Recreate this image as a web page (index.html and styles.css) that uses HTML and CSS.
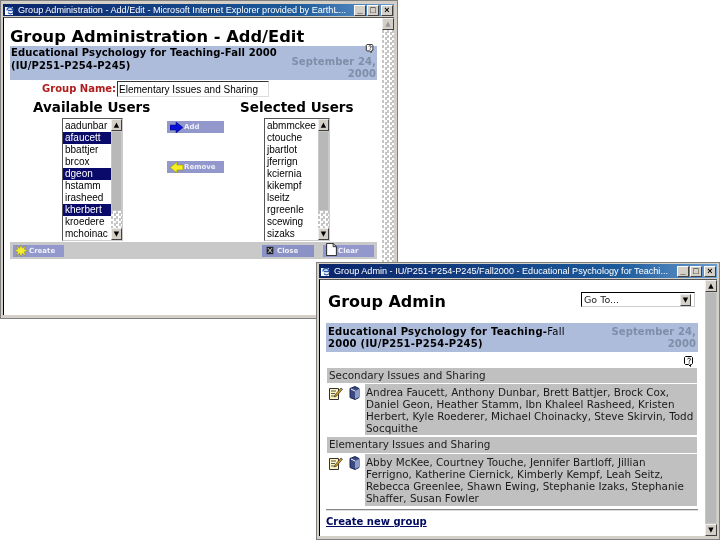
FILE: index.html
```html
<!DOCTYPE html>
<html lang="en">
<head>
<meta charset="utf-8">
<title>Group Administration</title>
<link rel="stylesheet" href="styles.css">
</head>
<body>
<svg class="defs" width="0" height="0">
  <symbol id="help" viewBox="0 0 10 11"><path d="M1.500 .5h6l1 1v6l-1 1h-1v2l-2-2h-3l-1-1v-6z" fill="#fff" stroke="#000"/><path d="M3.500 3c1-1.200 3-1 3 .3 0 1-1.300 1-1.300 2.200M5.200 6.500v1" fill="none" stroke="#000"/></symbol>
  <symbol id="edit" viewBox="0 0 14 14"><path d="M.5 2.500h9v11h-9z" fill="#fff3c0" stroke="#333"/><path d="M2 5h5M2 7.500h4M2 10h4" stroke="#555"/><path d="M6 9l6-7 1.500 1.200-6 7-2 .8z" fill="#d8a020" stroke="#333" stroke-width=".7"/></symbol>
  <symbol id="book" viewBox="0 0 13 14"><path d="M2 2.500l5-2 4 2v9l-4 2-5-2z" fill="#3a4a80" stroke="#1c2450"/><path d="M7 5v8l4-2V3z" fill="#8c9cc8"/><path d="M3 3l4 2" stroke="#fff"/></symbol>
</svg>

<section class="window win-edit">
  <header class="titlebar">
    <svg class="app-icon" width="12" height="12" viewBox="0 0 12 12"><path d="M1 3h8v8H1z" fill="#fff"/><path d="M3 6.500a3 3 0 1 1 6 0H4m5 2a3 3 0 0 1-5 0" fill="none" stroke="#2a5ab0" stroke-width="1.300"/></svg>
    <span class="title-text">Group Administration - Add/Edit - Microsoft Internet Explorer provided by EarthL...</span>
    <span class="win-buttons"><i class="wb">_</i><i class="wb">□</i><i class="wb wb-x">×</i></span>
  </header>
  <div class="client">
    <main class="page edit-page">
      <h1 class="edit-title">Group Administration - Add/Edit</h1>
      <div class="banner edit-banner">
        <div class="course edit-course">Educational Psychology for Teaching-Fall 2000<br>(IU/P251-P254-P245)</div>
        <div class="date-col">
          <svg class="help" width="10" height="11"><use href="#help"/></svg>
          <div class="date">September 24,<br>2000</div>
        </div>
      </div>
      <div class="name-row">
        <label class="name-label">Group Name:</label>
        <div class="name-input">Elementary Issues and Sharing</div>
      </div>
      <div class="pickers">
        <div class="picker picker-left">
          <h2 class="picker-title">Available Users</h2>
          <div class="listbox listbox-left">
            <ul class="options">
              <li>aadunbar</li><li class="sel">afaucett</li><li>bbattjer</li><li>brcox</li><li class="sel">dgeon</li><li>hstamm</li><li>irasheed</li><li class="sel">kherbert</li><li>kroedere</li><li>mchoinac</li>
            </ul>
            <div class="scroll scroll-list"><span class="sb-btn">▲</span><span class="sb-thumb thumb-left"></span><span class="sb-track"></span><span class="sb-btn">▼</span></div>
          </div>
        </div>
        <div class="picker-actions">
          <button class="btn btn-add"><svg width="13" height="11" viewBox="0 0 13 11"><path d="M0 3h6V0l7 5.500L6 11V8H0z" fill="#0a10d8" stroke="#000060" stroke-width=".5"/></svg><span>Add</span><b class="grip"></b></button>
          <button class="btn btn-remove"><svg width="13" height="11" viewBox="0 0 13 11"><path d="M13 3H7V0L0 5.500 7 11V8h6z" fill="#f5ee20" stroke="#8a8000" stroke-width=".5"/></svg><span>Remove</span><b class="grip"></b></button>
        </div>
        <div class="picker picker-right">
          <h2 class="picker-title">Selected Users</h2>
          <div class="listbox listbox-right">
            <ul class="options">
              <li>abmmckee</li><li>ctouche</li><li>jbartlot</li><li>jferrign</li><li>kciernia</li><li>kikempf</li><li>lseitz</li><li>rgreenle</li><li>scewing</li><li>sizaks</li>
            </ul>
            <div class="scroll scroll-list"><span class="sb-btn">▲</span><span class="sb-thumb thumb-right"></span><span class="sb-track"></span><span class="sb-btn">▼</span></div>
          </div>
        </div>
      </div>
      <div class="toolbar">
        <button class="btn btn-create"><svg width="14" height="12" viewBox="0 0 14 13"><path d="M7 0l1.500 3.500L12 1l-1.500 3.500L14 6l-3.500 1.500L12 12 8.500 9 7 13 5.500 9 2 12l1.500-4.500L0 6l3.500-1.500L2 1l3.500 2.500z" fill="#f4ee30" stroke="#807000" stroke-width=".4"/></svg><span>Create</span><b class="grip"></b></button>
        <span class="toolbar-right">
          <button class="btn btn-close"><svg width="8" height="9" viewBox="0 0 12 11"><path d="M1 0h10v11H1z" fill="#222"/><path d="M3 2l6 7M9 2l-6 7" stroke="#ddd" stroke-width="1.500"/></svg><span>Close</span><b class="grip"></b></button>
          <button class="btn btn-clear"><svg class="doc" width="11" height="13" viewBox="0 0 13 16"><path d="M.5.500h8l4 4v11H.5z" fill="#fff" stroke="#000"/><path d="M8.500.500v4h4" fill="none" stroke="#000"/></svg><span>Clear</span><b class="grip"></b></button>
        </span>
      </div>
    </main>
    <div class="scroll scroll-edit"><span class="sb-btn sb-faded">▲</span><span class="sb-track"></span></div>
  </div>
</section>

<section class="window win-admin">
  <header class="titlebar">
    <svg class="app-icon" width="12" height="12" viewBox="0 0 12 12"><path d="M1 3h8v8H1z" fill="#fff"/><path d="M3 6.500a3 3 0 1 1 6 0H4m5 2a3 3 0 0 1-5 0" fill="none" stroke="#2a5ab0" stroke-width="1.300"/></svg>
    <span class="title-text">Group Admin - IU/P251-P254-P245/Fall2000 - Educational Psychology for Teachi...</span>
    <span class="win-buttons"><i class="wb">_</i><i class="wb">□</i><i class="wb wb-x">×</i></span>
  </header>
  <div class="client">
    <main class="page admin-page">
      <div class="admin-head">
        <h1 class="admin-title">Group Admin</h1>
        <div class="goto"><span>Go To...</span><i class="sb-btn goto-arrow">▼</i></div>
      </div>
      <div class="banner admin-banner">
        <div class="course admin-course">Educational Psychology for Teaching-<span class="light">Fall</span><br>2000 (IU/P251-P254-P245)</div>
        <div class="date">September 24,<br>2000</div>
      </div>
      <div class="help-row"><svg width="10" height="11"><use href="#help"/></svg></div>
      <div class="group-name">Secondary Issues and Sharing</div>
      <div class="group-row">
        <div class="group-icons"><svg width="14" height="14"><use href="#edit"/></svg><svg width="13" height="14"><use href="#book"/></svg></div>
        <div class="members">Andrea Faucett, Anthony Dunbar, Brett Battjer, Brock Cox,<br>Daniel Geon, Heather Stamm, Ibn Khaleel Rasheed, Kristen<br>Herbert, Kyle Roederer, Michael Choinacky, Steve Skirvin, Todd<br>Socquithe</div>
      </div>
      <div class="group-name group-name-next">Elementary Issues and Sharing</div>
      <div class="group-row">
        <div class="group-icons"><svg width="14" height="14"><use href="#edit"/></svg><svg width="13" height="14"><use href="#book"/></svg></div>
        <div class="members members-next">Abby McKee, Courtney Touche, Jennifer Bartloff, Jillian<br>Ferrigno, Katherine Ciernick, Kimberly Kempf, Leah Seitz,<br>Rebecca Greenlee, Shawn Ewing, Stephanie Izaks, Stephanie<br>Shaffer, Susan Fowler</div>
      </div>
      <hr class="rule">
      <a class="create-link" href="#">Create new group</a>
    </main>
    <div class="scroll scroll-admin"><span class="sb-btn">▲</span><span class="sb-thumb thumb-admin"></span><span class="sb-btn">▼</span></div>
  </div>
</section>
</body>
</html>
```

FILE: styles.css
```css
* { box-sizing: border-box; }
html, body { margin: 0; padding: 0; }
body { width: 720px; height: 540px; overflow: hidden; background: #fff; position: relative; font-family: "DejaVu Sans", sans-serif; color: #000; }
.defs { position: absolute; }
h1, h2, ul { margin: 0; padding: 0; }
button { font: inherit; margin: 0; }

.window { position: absolute; display: flex; flex-direction: column; background: #d4d0c8; border: 1px solid #808080; padding: 3px 3px 3px 2px; filter: blur(.3px); }
.win-edit { left: 0; top: 0; width: 398px; height: 319px; }
.win-admin { left: 316px; top: 262px; width: 404px; height: 278px; padding: 1px 2px 3px 2px; }
.win-admin .titlebar { height: 14px; }

.titlebar { flex: none; height: 12px; display: flex; align-items: center; gap: 2px; padding: 0 1px; background: linear-gradient(90deg, #0a246a, #1c5a9a 75%, #6a9cd0); color: #fff; font: 9.100px/12px "Liberation Sans", sans-serif; white-space: nowrap; overflow: hidden; }
.app-icon { flex: none; }
.title-text { flex: 1; min-width: 0; overflow: hidden; }
.win-buttons { display: flex; flex: none; }
.wb { width: 12px; height: 11px; margin-left: 1px; background: #d4d0c8; border: 1px solid; border-color: #fff #404040 #404040 #fff; color: #000; font: bold 9px/8px "Liberation Sans", sans-serif; text-align: center; }
.wb-x { margin-left: 2px; }

.client { flex: 1; min-height: 0; margin-top: 1px; display: flex; background: #fff; border-left: 1px solid #000; border-top: 1px solid #555; }
.page { flex: 1; min-width: 0; }
.edit-page { padding: 10px 5px 0 6px; }
.admin-page { padding: 11px 7px 0 6px; }

.scroll { flex: none; display: flex; flex-direction: column; width: 12px; }
.scroll-admin { background: #c0c0c0; }
.sb-btn { flex: none; display: block; height: 12px; background: #d4d0c8; border: 1px solid; border-color: #eee #404040 #404040 #eee; font: 7px/10px "DejaVu Sans", sans-serif; text-align: center; color: #000; font-style: normal; overflow: hidden; }
.sb-faded { color: #999; }
.sb-track { flex: 1; background: conic-gradient(#fff 25%, #c4c4c4 0 50%, #fff 0 75%, #c4c4c4 0) 0 0 / 5px 5px; }
.sb-thumb { display: block; flex: none; background: #b8b8b8; border: 1px solid #c8c8c8; }
.thumb-left, .thumb-right { height: 80px; }
.thumb-admin { flex: 1; }

.edit-title { font-size: 16.300px; line-height: 18px; font-weight: 700; white-space: nowrap; }
.banner { display: flex; justify-content: space-between; background: #adbcdb; font-weight: 700; font-size: 10px; line-height: 12px; }
.edit-banner { height: 34px; padding: 0 1px; }
.course { letter-spacing: .1px; white-space: nowrap; }
.edit-course { padding-top: 1px; line-height: 12.500px; }
.admin-course { letter-spacing: .25px; }
.date-col { display: flex; flex-direction: column; align-items: flex-end; }
.help { display: block; margin: -2px 1px 3px 0; }
.date { color: #7f8ea8; text-align: right; letter-spacing: .1px; white-space: nowrap; }

.name-row { display: flex; align-items: center; height: 17px; padding-left: 32px; }
.name-label { width: 75px; flex: none; color: #b01c1c; font-weight: 700; font-size: 10px; white-space: nowrap; }
.name-input { width: 152px; height: 16px; border-top: 1px solid #333; border-left: 1px solid #333; border-right: 1px solid #ddd; border-bottom: 1px solid #ddd; font: 10px/15px "Liberation Sans", sans-serif; padding-left: 1px; white-space: nowrap; overflow: hidden; }

.pickers { display: flex; padding-top: 1px; }
.picker-title { font-size: 13.500px; line-height: 18px; font-weight: 700; white-space: nowrap; height: 20px; }
.picker-left { width: 157px; padding-left: 23px; }
.picker-right { width: 153px; padding-left: 16px; }
.listbox { display: flex; height: 123px; background: #fff; border: 1px solid; border-color: #555 #ccc #ccc #555; }
.listbox-left { width: 61px; margin-left: 29px; }
.listbox-right { width: 66px; margin-left: 24px; }
.options { flex: 1; min-width: 0; list-style: none; font: 10px/12px "Liberation Sans", sans-serif; padding-top: 1px; }
.options li { padding-left: 2px; white-space: nowrap; overflow: hidden; height: 12px; }
.options li.sel { background: #0a0a6a; color: #fff; }
.scroll-list { width: 11px; }

.picker-actions { flex: none; width: 57px; padding-top: 23px; display: flex; flex-direction: column; gap: 28px; }
.btn { display: flex; align-items: center; gap: 1px; height: 12px; width: 57px; padding: 0 0 0 3px; border: 0; background: #9298cc; color: #fff; font-size: 7px; font-weight: 700; line-height: 12px; position: relative; overflow: visible; text-align: left; white-space: nowrap; }
.btn svg { flex: none; }
.btn span { opacity: .85; }
.grip { position: absolute; right: 2px; bottom: 2px; width: 5px; height: 4px; background: radial-gradient(circle, #fff 40%, transparent 45%) 0 0 / 2px 2px; }

.toolbar { display: flex; justify-content: space-between; align-items: center; height: 17px; margin-top: 1px; padding: 0 3px; background: #c9c9c9; }
.toolbar-right { display: flex; gap: 9px; }
.btn-create { width: 51px; padding-left: 1px; }
.btn-close { width: 52px; padding-left: 4px; gap: 3px; background: #8b92c6; }
.btn-clear { width: 51px; padding-left: 3px; }
.doc { margin-top: -2px; }

.admin-head { display: flex; justify-content: space-between; padding: 0 3px 0 2px; height: 32px; }
.admin-title { font-size: 16px; line-height: 20px; font-weight: 700; white-space: nowrap; padding-top: 1px; }
.goto { width: 114px; height: 15px; margin-top: 1px; display: flex; justify-content: space-between; align-items: center; padding: 0 3px 0 2px; border: 1px solid; border-color: #000 #ccc #ccc #000; font-size: 9.500px; color: #222; }
.goto-arrow { width: 11px; height: 12px; }
.admin-banner { height: 29px; padding: 3px 2px 0 2px; }
.admin-course .light { font-weight: 400; }
.help-row { height: 16px; padding: 4px 4px 0; display: flex; justify-content: flex-end; }
.group-name { margin: 0 1px; background: #c0c0c0; height: 15px; font-size: 10.400px; line-height: 15px; padding-left: 2px; color: #222; white-space: nowrap; }
.group-name-next { height: 16px; }
.group-row { display: flex; margin: 1px 1px 2px; }
.group-icons { flex: none; width: 38px; display: flex; gap: 5px; padding: 2px 0 0 2px; }
.members { flex: 1; background: #c0c0c0; font-size: 10.400px; line-height: 12px; padding: 2px 0 2px 1px; color: #1a1a1a; white-space: nowrap; overflow: hidden; height: 51px; }
.members-next { height: 52px; }
.rule { margin: 3px 0 0; border: 0; border-top: 1px solid #888; border-bottom: 1px solid #ddd; height: 2px; }
.create-link { display: block; margin-top: 4px; font-size: 10px; line-height: 13px; font-weight: 700; color: #000a60; }
```
